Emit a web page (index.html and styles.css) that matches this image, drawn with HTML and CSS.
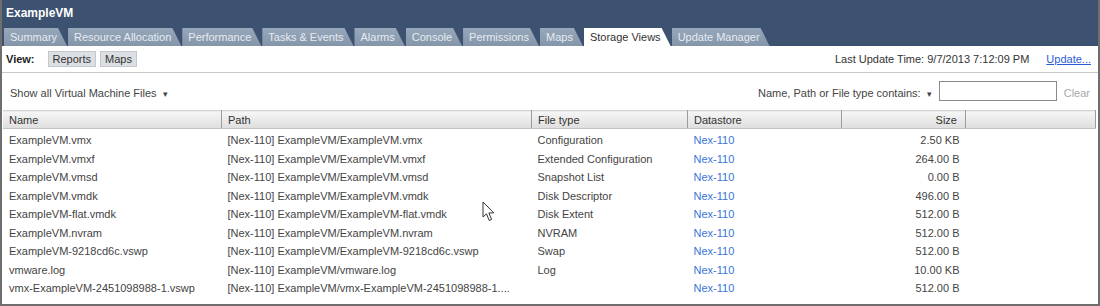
FILE: index.html
```html
<!DOCTYPE html>
<html lang="en">
<head>
    <meta charset="UTF-8">
    <title>ExampleVM - Storage Views</title>
    <link rel="stylesheet" href="styles.css">
</head>
<body>

    <div class="window">
        <div class="titlebar">ExampleVM</div>

        <div class="tabs">
            <div class="tab">Summary</div>
            <div class="tab">Resource Allocation</div>
            <div class="tab">Performance</div>
            <div class="tab">Tasks &amp; Events</div>
            <div class="tab">Alarms</div>
            <div class="tab">Console</div>
            <div class="tab">Permissions</div>
            <div class="tab">Maps</div>
            <div class="tab active">Storage Views</div>
            <div class="tab">Update Manager</div>
        </div>

        <div class="content">
            <div class="view-bar">
                <span class="view-label">View:</span>
                <span class="view-btn">Reports</span>
                <span class="view-btn">Maps</span>
                <span class="spacer"></span>
                <span class="update-time">Last Update Time: 9/7/2013 7:12:09 PM</span>
                <a class="update-link" href="#">Update...</a>
            </div>

            <div class="filter-bar">
                <span class="dropdown">Show all Virtual Machine Files <span class="caret">&#9662;</span></span>
                <span class="spacer"></span>
                <span class="dropdown">Name, Path or File type contains: <span class="caret">&#9662;</span></span>
                <input class="search" type="text">
                <span class="clear">Clear</span>
            </div>

            <table class="files">
                <thead>
                    <tr>
                        <th class="c-name">Name</th>
                        <th class="c-path">Path</th>
                        <th class="c-type">File type</th>
                        <th class="c-ds">Datastore</th>
                        <th class="c-size">Size</th>
                        <th class="c-fill"></th>
                    </tr>
                </thead>
                <tbody id="fileRows"></tbody>
            </table>

            <svg class="cursor" width="14" height="22" viewBox="0 0 14 22">
                <path d="M1 1 L1 16 L4.5 12.8 L7.2 19.5 L9.6 18.5 L6.9 11.9 L11.8 11.9 Z" fill="#fff" stroke="#333" stroke-width="1" stroke-linejoin="round"/>
            </svg>
        </div>
    </div>

    <script>
        const files = [
            ["ExampleVM.vmx", "[Nex-110] ExampleVM/ExampleVM.vmx", "Configuration", "2.50 KB"],
            ["ExampleVM.vmxf", "[Nex-110] ExampleVM/ExampleVM.vmxf", "Extended Configuration", "264.00 B"],
            ["ExampleVM.vmsd", "[Nex-110] ExampleVM/ExampleVM.vmsd", "Snapshot List", "0.00 B"],
            ["ExampleVM.vmdk", "[Nex-110] ExampleVM/ExampleVM.vmdk", "Disk Descriptor", "496.00 B"],
            ["ExampleVM-flat.vmdk", "[Nex-110] ExampleVM/ExampleVM-flat.vmdk", "Disk Extent", "512.00 B"],
            ["ExampleVM.nvram", "[Nex-110] ExampleVM/ExampleVM.nvram", "NVRAM", "512.00 B"],
            ["ExampleVM-9218cd6c.vswp", "[Nex-110] ExampleVM/ExampleVM-9218cd6c.vswp", "Swap", "512.00 B"],
            ["vmware.log", "[Nex-110] ExampleVM/vmware.log", "Log", "10.00 KB"],
            ["vmx-ExampleVM-2451098988-1.vswp", "[Nex-110] ExampleVM/vmx-ExampleVM-2451098988-1....", "", "512.00 B"]
        ];

        const body = document.getElementById("fileRows");
        files.forEach(f => {
            const row = document.createElement("tr");
            row.innerHTML = `
                <td>${f[0]}</td>
                <td>${f[1]}</td>
                <td>${f[2]}</td>
                <td><a href="#">Nex-110</a></td>
                <td class="c-size">${f[3]}</td>
                <td></td>
            `;
            body.appendChild(row);
        });
    </script>

</body>
</html>
```

FILE: styles.css
```css
body {
    margin: 0;
    padding: 0;
    font-family: 'Liberation Sans', Arial, sans-serif;
    font-size: 11px;
    color: #444444;
    background: #ffffff;
}

.window {
    width: 1100px;
    height: 306px;
    box-sizing: border-box;
    border: 2px solid #6e6e6e;
    border-top: none;
    display: flex;
    flex-direction: column;
    overflow: hidden;
}

.titlebar {
    background-color: #3c5270;
    color: #ffffff;
    font-weight: bold;
    font-size: 12px;
    height: 28px;
    line-height: 26px;
    padding-left: 4px;
}

.tabs {
    background-color: #3c5270;
    display: flex;
    height: 18px;
    padding-left: 2px;
    gap: 1px;
}

.tab {
    background: linear-gradient(#98a8bb, #8495aa);
    color: #e6ebf1;
    font-size: 11px;
    line-height: 18px;
    padding: 0 10px 0 6px;
    clip-path: polygon(0 0, calc(100% - 9px) 0, 100% 100%, 0 100%);
    white-space: nowrap;
}

.tab.active {
    background: #ffffff;
    color: #333333;
}

.content {
    position: relative;
    flex: 1;
    background: #ffffff;
}

.view-bar {
    display: flex;
    align-items: center;
    height: 26px;
    padding: 0 7px 0 4px;
    border-bottom: 1px solid #c8c8c8;
}

.view-label {
    font-weight: bold;
    color: #222;
    margin-right: 13px;
}

.view-btn {
    background: #dcdfe3;
    border: 1px solid #c4c7cb;
    padding: 1px 4px;
    margin-right: 4px;
    color: #333;
}

.spacer {
    flex: 1;
}

.update-time {
    color: #333;
}

.update-link {
    color: #2a5bd7;
    margin-left: 17px;
}

.filter-bar {
    display: flex;
    align-items: center;
    height: 37px;
    padding: 2px 8px 0 8px;
    box-sizing: border-box;
}

.caret {
    font-size: 9px;
    margin-left: 3px;
}

.search {
    width: 118px;
    height: 20px;
    box-sizing: border-box;
    border: 1px solid #8a8a8a;
    margin: 0 7px 3px 7px;
    padding: 0 2px;
}

.clear {
    color: #a8a8a8;
}

.files {
    border-collapse: collapse;
    margin-left: 1px;
    width: 1093px;
    table-layout: fixed;
}

.files th {
    background: linear-gradient(#f6f6f6, #dedede);
    border-top: 1px solid #d4d4d4;
    border-bottom: 1px solid #c2c2c2;
    border-right: 1px solid #9c9c9c;
    font-weight: normal;
    text-align: left;
    height: 17px;
    padding: 0 6px;
    color: #333;
}

.files td {
    height: 18.5px;
    padding: 0 6px;
    white-space: nowrap;
    overflow: hidden;
}

.files tbody tr:first-child td {
    padding-top: 2px;
}

.files a {
    color: #3a74d8;
    text-decoration: none;
}

.files .c-name { width: 206px; }
.files .c-path { width: 297px; }
.files .c-type { width: 143px; }
.files .c-ds { width: 141px; }
.files .c-size { width: 109px; text-align: right; }
.files th.c-size { padding-right: 8px; }

.cursor {
    position: absolute;
    left: 480px;
    top: 155px;
}
```
